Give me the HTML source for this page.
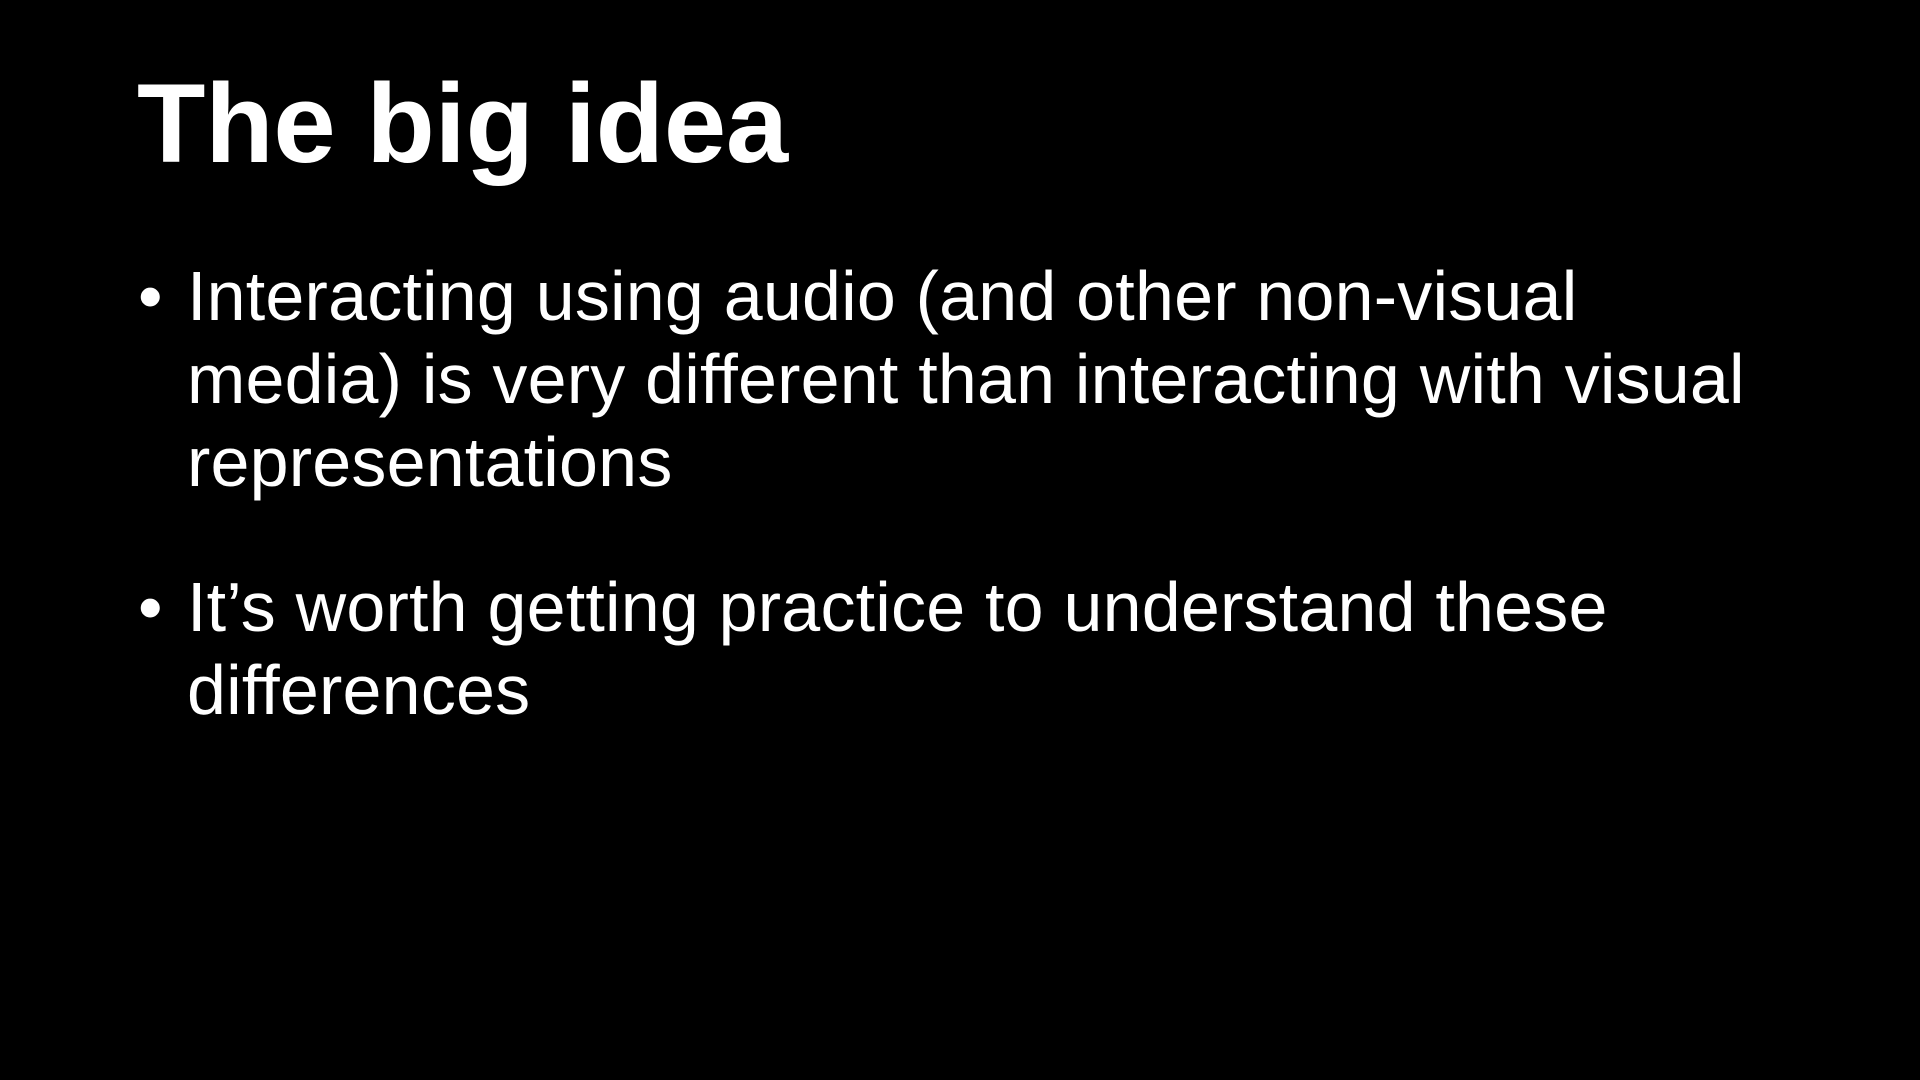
<!DOCTYPE html>
<html><head><meta charset="utf-8"><style>
html,body{margin:0;padding:0;background:#000;width:1920px;height:1080px;overflow:hidden}
body{font-family:"Liberation Sans",Arial,sans-serif;color:#fff;position:relative}
.t{position:absolute;left:137px;top:68px;font-size:112px;font-weight:bold;line-height:1;letter-spacing:-0.2px}
.l{position:absolute;left:187px;font-size:70px;line-height:1;white-space:nowrap;letter-spacing:0.2px}
.b{position:absolute;left:138px;font-size:70px;line-height:1}
</style></head><body>
<div class="t">The big idea</div>
<div class="b" style="top:261px">•</div>
<div class="l" style="top:261px">Interacting using audio (and other non-visual</div>
<div class="l" style="top:344px">media) is very different than interacting with visual</div>
<div class="l" style="top:427px">representations</div>
<div class="b" style="top:572px">•</div>
<div class="l" style="top:572px">It’s worth getting practice to understand these</div>
<div class="l" style="top:655px">differences</div>
</body></html>
